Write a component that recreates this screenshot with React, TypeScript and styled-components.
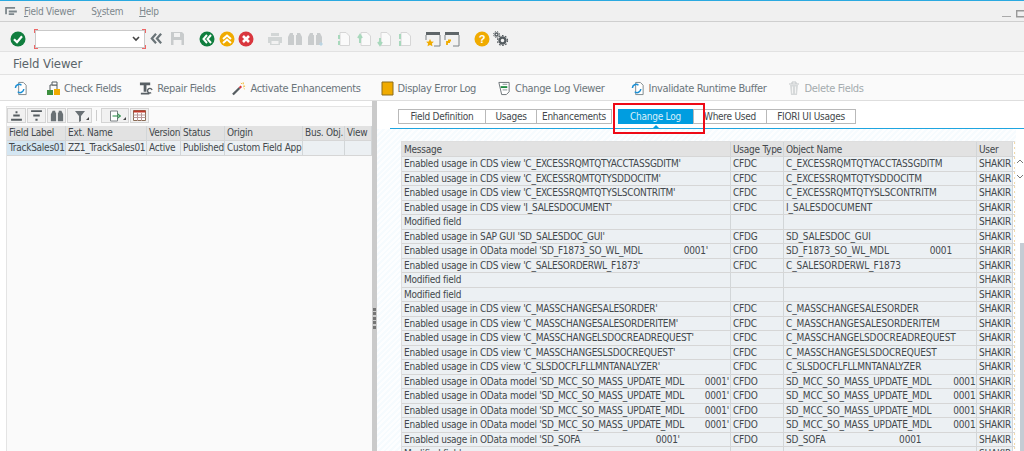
import React from "react";
import styled, { createGlobalStyle } from "styled-components";

const Global = createGlobalStyle`
  html, body { margin: 0; padding: 0; background: #fff; }
  #root { width: 1024px; height: 451px; overflow: hidden; }
  * { box-sizing: border-box; }
`;

const Page = styled.div`
  width: 1024px; height: 451px; overflow: hidden; display: flex; flex-direction: column;
  font-family: "DejaVu Sans Condensed", "Liberation Sans", Arial, sans-serif; font-size: 10px; color: #3f4a4f;
  letter-spacing: -0.25px;
  border-top: 1px solid #2aa9e0; background: #fff;
`;
const MenuBar = styled.div`
  height: 21px; flex: none; display: flex; align-items: center; padding: 0 0 0 5px; background: #f0f0f0;
  border-bottom: 1px solid #cfcfcf; color: #7d878c; font-size: 10px;
`;
const MenuItem = styled.span<{ $ml: number }>`
  margin-left: ${(p) => p.$ml}px;
`;
const Hot = styled.u`text-decoration: underline;`;
const WinCtl = styled.div`margin-left: auto; display: flex; align-items: center; padding-top: 3px;`;
const Toolbar = styled.div`
  height: 30px; flex: none; display: flex; align-items: center; padding: 4px 0 0 10px; background: #f2f2f2;
  border-bottom: 1px solid #e2e2e2;
`;
const IconSlot = styled.span<{ $ml?: number }>`
  width: 16px; height: 16px; margin-left: ${(p) => p.$ml ?? 0}px; flex: none; display: inline-flex;
  align-items: center; justify-content: center;
  svg { display: block; }
`;
const Combo = styled.div`
  width: 110px; height: 18px; margin-left: 9px; flex: none; background: #fff; border: 1px solid #c9c9c9; position: relative;
  display: flex; align-items: center; justify-content: flex-end; padding-right: 4px;
`;
const Corner = styled.i<{ $c: string }>`
  position: absolute; width: 4px; height: 4px; ${(p) => p.$c}
`;
const TitleBar = styled.div`
  height: 23px; flex: none; display: flex; align-items: center; padding-left: 13px; background: #f8f8f8;
  border-bottom: 1px solid #e2e2e2; font-size: 13px; color: #5a6469; letter-spacing: -0.1px;
`;
const AppBar = styled.div`
  height: 26px; flex: none; display: flex; align-items: center; background: #fafafa; border-bottom: 1px solid #dedede;
  padding: 1px 0 0 14px; color: #6b757a; font-size: 11px; letter-spacing: -0.35px;
`;
const AppBtn = styled.span<{ $ml: number; $gap?: number; $off?: boolean }>`
  display: inline-flex; align-items: center; gap: ${(p) => p.$gap ?? 4}px; margin-left: ${(p) => p.$ml}px; flex: none;
  color: ${(p) => (p.$off ? "#a4abae" : "#6b757a")}; white-space: nowrap;
`;
const Body = styled.div`flex: 1; display: flex; min-height: 0;`;
const LeftPane = styled.div`
  width: 372px; flex: none; background: #fff; padding: 5px 0 0 6px;
`;
const LeftInner = styled.div`
  height: 100%; background: #fafafa; border-top: 1px solid #e4e4e4; border-left: 1px solid #e4e4e4;
`;
const LeftTools = styled.div`
  height: 19px; display: flex; align-items: flex-start; padding-top: 1px; gap: 1px;
`;
const MiniBtn = styled.span<{ $w?: number }>`
  width: ${(p) => p.$w ?? 19}px; height: 15px; background: #f1f1f1; border: 1px solid #d4d4d4; display: inline-flex;
  align-items: center; justify-content: center; position: relative; flex: none;
  svg { display: block; }
`;
const Caret = styled.i`
  position: absolute; right: 2px; bottom: 2px; width: 0; height: 0; border-style: solid; border-width: 0 0 3px 3px;
  border-color: transparent transparent #444 transparent;
`;
const Sep = styled.span`width: 1px; height: 11px; margin: 2px 3px 0 3px; background: #ccc; flex: none;`;
const Splitter = styled.div`
  width: 5px; flex: none; background: #cacaca; display: flex; align-items: center; justify-content: center; padding-top: 86px;
`;
const Grip = styled.div`
  width: 3px; height: 22px;
  background: repeating-linear-gradient(to bottom, #757575 0 3px, transparent 3px 4.5px);
`;
const Row = styled.div<{ $cols: string; $h: number; $head?: boolean; $lh?: number }>`
  display: grid; grid-template-columns: ${(p) => p.$cols}; height: ${(p) => p.$h}px;
  background: ${(p) => (p.$head ? "#e2e2e2" : "#ecf0f3")};
  line-height: ${(p) => p.$lh ?? 13}px;
  color: #43484c; border-bottom: 1px solid #d6d6d6;
`;
const Cell = styled.div<{ $hl?: boolean; $mono?: boolean }>`
  padding-left: 2px; white-space: pre; overflow: hidden; border-right: 1px solid #d2d6d8;
  letter-spacing: ${(p) => (p.$mono ? "-0.13px" : "inherit")};
  background: ${(p) => (p.$hl ? "#d4e6f2" : "transparent")};
`;
const EdgeCell = styled.div`
  background: #fff repeating-linear-gradient(to bottom, #f4d9a8 0 2px, transparent 2px 5px) no-repeat 1px 0 / 1px 100%;
`;
const RightPane = styled.div`
  flex: 1; min-width: 0; padding-top: 8px; background: #fff; position: relative;
`;
const Tabs = styled.div`
  height: 16px; margin-left: 21px; display: flex;
`;
const Tab = styled.div<{ $w: number; $on?: boolean }>`
  width: ${(p) => p.$w}px; height: 15px; flex: none; text-align: center; line-height: 13px;
  position: relative; background: ${(p) => (p.$on ? "#009de0" : "#fff")}; color: ${(p) => (p.$on ? "#d8f0fb" : "#43484c")};
  border: 1px solid ${(p) => (p.$on ? "#009de0" : "#b9b9b9")};
  margin-right: ${(p) => (p.$on ? 0 : -1)}px; margin-left: ${(p) => (p.$on ? 7 : 0)}px;
  &::after {
    content: ${(p) => (p.$on ? '""' : "none")}; position: absolute; left: 50%; bottom: -5px; margin-left: -3px;
    border-style: solid; border-width: 0 3px 3px; border-color: transparent transparent #009de0;
  }
`;
const TabLine = styled.div`height: 1px; margin: 3px 0 0 13px; background: #1ea5e0;`;
const Highlight = styled.div`
  position: absolute; left: 236px; top: 2px; width: 92px; height: 31px; border: 2px solid #ee0a16; pointer-events: none;
`;
const TableArea = styled.div`
  padding: 12px 0 0 24px; height: 340px;
  background: repeating-linear-gradient(135deg, #f6fbfe 0 2px, #fdfeff 2px 4px);
`;
const TableWrap = styled.div`
  width: 614px; height: 100%; overflow: hidden; background: #fff; border-top: 1px solid #dedede; border-left: 1px solid #dedede;
`;
const Gutter = styled.div`
  position: absolute; right: 0; top: 28px; bottom: 0; width: 8px; background: #fff;
  display: flex; flex-direction: column; align-items: flex-end;
`;
const ArrowBox = styled.div`margin-top: 29px; width: 8px; svg { display: block; }`;
const Thumb = styled.div`
  position: absolute; right: 0; top: 142px; bottom: 0; width: 4px; background: #c5ccd4;
`;

const Check = () => (<svg width="16" height="16" viewBox="0 0 16 16"><circle cx="8" cy="8" r="7.5" fill="#107e3e"/><path d="M4 8.200l3 3 5-6" stroke="#fff" strokeWidth="2.200" fill="none"/></svg>);
const Dbl = ({ up, c }: { up?: boolean; c: string }) => (<svg width="16" height="16" viewBox="0 0 16 16"><circle cx="8" cy="8" r="7.500" fill={c}/><path d={up ? "M4 8l4-3.500 4 3.500M4 12l4-3.500 4 3.500" : "M8 4L4.500 8 8 12M12 4L8.500 8 12 12"} stroke="#fff" strokeWidth="2" fill="none"/></svg>);
const Cancel = () => (<svg width="16" height="16" viewBox="0 0 16 16"><circle cx="8" cy="8" r="7.500" fill="#d9363e"/><path d="M5 5l6 6M11 5l-6 6" stroke="#fff" strokeWidth="2.600"/></svg>);
const Back = () => (<svg width="13" height="13" viewBox="0 0 14 14"><path d="M6.500 2L2 7l4.500 5M12 2L7.500 7l4.500 5" stroke="#6a7478" strokeWidth="2.400" fill="none"/></svg>);
const Save = () => (<svg width="15" height="15" viewBox="0 0 15 15"><path d="M1 1h11l2 2v11H1z" fill="#c8cbcc"/><path d="M4 2h6v4H4zM3.500 9h8v5h-8z" fill="#f2f2f2"/></svg>);
const Print = () => (<svg width="16" height="16" viewBox="0 0 16 16"><path d="M4 2h8v3H4zM1 6h14v6h-2v2H3v-2H1z" fill="#d2d6d6"/><path d="M4.500 10h7v3h-7z" fill="#f2f2f2"/></svg>);
const Binoc = ({ c = "#c9cccd", plus, size = 16 }: { c?: string; plus?: boolean; size?: number }) => (<svg width={size} height={size} viewBox="0 0 16 16"><path d="M3 2h3v2h1v10H1V6zM10 2h3l2 4v8H9V4h1z" fill={c}/>{plus && <path d="M12 13h4M14 11v4" stroke="#b6d6e8"/>}</svg>);
const Doc = ({ mark, c = "#a8d8bc" }: { mark: string; c?: string }) => (<svg width="15" height="16" viewBox="0 0 15 16"><path d="M4 1.500h6l3.500 3.500v9.500H4z" fill="#fafafa" stroke="#d6d6d6"/><path d={mark} stroke={c} strokeWidth="2" fill="none"/></svg>);
const Win = ({ star }: { star?: boolean }) => (<svg width="16" height="16" viewBox="0 0 16 16"><path d="M1 1h14v3H1z" fill="#5f6669"/><path d="M15 4v11H9M1 4v5" stroke="#7c8285" fill="none"/>{star ? <path d="M5 8l1.200 2.500 2.700.3-2 1.800.6 2.700L5 14l-2.500 1.300.6-2.700-2-1.800 2.700-.3z" fill="#f0ab00"/> : <path d="M3 14v-3h3M4 9.500h3" stroke="#f0ab00" strokeWidth="1.800" fill="none"/>}</svg>);
const Help = () => (<svg width="16" height="16" viewBox="0 0 16 16"><circle cx="8" cy="8" r="7.500" fill="#f0ab00"/><text x="8" y="12" fontSize="11" fontWeight="bold" textAnchor="middle" fill="#fff" fontFamily="Liberation Sans">?</text></svg>);
const Gears = () => (<svg width="16" height="16" viewBox="0 0 16 16"><g fill="none" stroke="#555c60"><circle cx="9.500" cy="9.500" r="3" strokeWidth="2.400"/><circle cx="9.500" cy="9.500" r="5" strokeWidth="1.200" strokeDasharray="1.600 1.600"/><circle cx="3.500" cy="3.500" r="1.500" strokeWidth="1.400"/><circle cx="3.500" cy="3.500" r="3" strokeWidth="1" strokeDasharray="1.200 1.200"/></g></svg>);
const Refresh = () => (<svg width="14" height="15" viewBox="0 0 15 15"><path d="M5 1h5l3 3v10H5z" fill="#fff" stroke="#7b8488"/><path d="M1.500 7a4 4 0 016.500-3M10.500 8a4 4 0 01-6.500 3" stroke="#1a8fd6" strokeWidth="1.600" fill="none"/></svg>);
const CheckF = () => (<svg width="15" height="15" viewBox="0 0 15 15"><path d="M1 9h6v5H1z" fill="#3d8f3f"/><path d="M8 8h6v6H8z" fill="#f0ab00"/><path d="M4 9V4h7v4" stroke="#555c60" fill="none"/><path d="M6 1h5v3H6z" fill="#fff" stroke="#555c60"/></svg>);
const Repair = () => (<svg width="14" height="15" viewBox="0 0 15 15"><path d="M1 1h11v3H1zM5 4h3v7H5zM2 12h9v2H2z" fill="#596065"/><path d="M14 9a2.500 2.500 0 10-1 3" stroke="#596065" strokeWidth="1.500" fill="none"/></svg>);
const Wand = () => (<svg width="14" height="15" viewBox="0 0 15 15"><path d="M1 14l7-7" stroke="#555c60" strokeWidth="2.400"/><path d="M8 7l2-2" stroke="#d9363e" strokeWidth="2.200"/><path d="M12 1v2M14 5h-2M9.500 1.500l1 1M13.500 8l-1-1" stroke="#f0ab00"/></svg>);
const ErrLog = () => (<svg width="13" height="15" viewBox="0 0 13 15"><path d="M1 1h11v13H1z" fill="#f0ab00" stroke="#8b6d1c"/></svg>);
const ChangeLog = () => (<svg width="14" height="15" viewBox="0 0 15 15"><path d="M2 1h11v10l-3 3H5z" fill="#fff" stroke="#676f73"/><path d="M4 6h7" stroke="#1d8a3f" strokeWidth="2"/><path d="M6 3h5M6 9h5" stroke="#8a9296"/></svg>);
const Trash = () => (<svg width="14" height="15" viewBox="0 0 14 15"><path d="M2 3h10M5 3V1h4v2" stroke="#c2c6c8" fill="none"/><path d="M3 4h8l-1 10H4z" fill="#d6d9da"/><path d="M5.500 5.500v7M8.500 5.500v7" stroke="#f4f4f4"/></svg>);
const Chevron = () => (<svg width="8" height="6" viewBox="0 0 8 6"><path d="M1 1l3 3 3-3" stroke="#444" strokeWidth="1.600" fill="none"/></svg>);
const Lines = ({ d }: { d: string }) => (<svg width="13" height="12" viewBox="0 0 12 11"><path d={d} stroke="#555c60" strokeWidth="1.800" fill="none"/></svg>);
const Funnel = () => (<svg width="12" height="12" viewBox="0 0 12 12"><path d="M1 1h10L7 6v5L5 12V6z" fill="#6a7175"/></svg>);
const Export = () => (<svg width="13" height="12" viewBox="0 0 12 12"><path d="M1 1h7v10H1z" fill="#fff" stroke="#7c8285"/><path d="M3 6h8M8 3.500L11 6 8 8.500" stroke="#1d8a3f" fill="none"/></svg>);
const Layout = () => (<svg width="13" height="11" viewBox="0 0 13 11"><path d="M.5.500h12v10H.5z" fill="#fff" stroke="#8a6d55"/><path d="M.5.500h12v2H.5z" fill="#c0392b"/><path d="M.5 5h12M.5 7.500h12M4.500 3v8M8.500 3v8" stroke="#b99"/></svg>);

const leftCols = "59px 81px 34px 44px 78px 42px 1fr";
const rightCols = "329px 53px 193px 36px 1fr";
const sp = (n: number) => " ".repeat(n);
const msg = (name: string, gap: number) => `Enabled usage in OData model '${name}${sp(gap)}0001'`;
const obj = (name: string, gap: number) => `${name}${sp(gap)}0001`;
const MCC = "SD_MCC_SO_MASS_UPDATE_MDL";
const F = "SD_F1873_SO_WL_MDL";
const S = "SD_SOFA";
const rows: [string, string, string][] = [
  ["Enabled usage in CDS view 'C_EXCESSRQMTQTYACCTASSGDITM'", "CFDC", "C_EXCESSRQMTQTYACCTASSGDITM"],
  ["Enabled usage in CDS view 'C_EXCESSRQMTQTYSDDOCITM'", "CFDC", "C_EXCESSRQMTQTYSDDOCITM"],
  ["Enabled usage in CDS view 'C_EXCESSRQMTQTYSLSCONTRITM'", "CFDC", "C_EXCESSRQMTQTYSLSCONTRITM"],
  ["Enabled usage in CDS view 'I_SALESDOCUMENT'", "CFDC", "I_SALESDOCUMENT"],
  ["Modified field", "", ""],
  ["Enabled usage in SAP GUI 'SD_SALESDOC_GUI'", "CFDG", "SD_SALESDOC_GUI"],
  [msg(F, 16), "CFDO", obj(F, 15)],
  ["Enabled usage in CDS view 'C_SALESORDERWL_F1873'", "CFDC", "C_SALESORDERWL_F1873"],
  ["Modified field", "", ""],
  ["Modified field", "", ""],
  ["Enabled usage in CDS view 'C_MASSCHANGESALESORDER'", "CFDC", "C_MASSCHANGESALESORDER"],
  ["Enabled usage in CDS view 'C_MASSCHANGESALESORDERITEM'", "CFDC", "C_MASSCHANGESALESORDERITEM"],
  ["Enabled usage in CDS view 'C_MASSCHANGELSDOCREADREQUEST'", "CFDC", "C_MASSCHANGELSDOCREADREQUEST"],
  ["Enabled usage in CDS view 'C_MASSCHANGESLSDOCREQUEST'", "CFDC", "C_MASSCHANGESLSDOCREQUEST"],
  ["Enabled usage in CDS view 'C_SLSDOCFLFLLMNTANALYZER'", "CFDC", "C_SLSDOCFLFLLMNTANALYZER"],
  [msg(MCC, 8), "CFDO", obj(MCC, 8)],
  [msg(MCC, 8), "CFDO", obj(MCC, 8)],
  [msg(MCC, 8), "CFDO", obj(MCC, 8)],
  [msg(MCC, 8), "CFDO", obj(MCC, 8)],
  [msg(S, 29), "CFDO", obj(S, 27)],
  ["Modified field", "", ""],
];

export default function App() {
  return (
    <Page>
      <Global />
      <MenuBar>
        <svg width="12" height="9" viewBox="0 0 13 10"><path d="M0 0h11v2H0zM4 4h9v2H4zM4 7h6v2H4zM0 2h2v6H0z" fill="#7d878c"/></svg>
        <MenuItem $ml={7}><Hot>F</Hot>ield Viewer</MenuItem>
        <MenuItem $ml={16}>S<Hot>y</Hot>stem</MenuItem>
        <MenuItem $ml={16}><Hot>H</Hot>elp</MenuItem>
        <WinCtl>
          <svg width="22" height="10" viewBox="0 0 22 10"><path d="M0 8.500h9" stroke="#aaa"/><path d="M14.700 2.700h8v6h-8z" fill="none" stroke="#999" strokeWidth="1.400"/></svg>
        </WinCtl>
      </MenuBar>
      <Toolbar>
        <IconSlot><Check /></IconSlot>
        <Combo>
          <Corner $c="left:-2px;top:-2px;border-left:1px solid #e66;border-top:1px solid #e66;" />
          <Corner $c="right:-2px;top:-2px;border-right:1px solid #e66;border-top:1px solid #e66;" />
          <Corner $c="left:-2px;bottom:-2px;border-left:1px solid #e66;border-bottom:1px solid #e66;" />
          <Corner $c="right:-2px;bottom:-2px;border-right:1px solid #e66;border-bottom:1px solid #e66;" />
          <Chevron />
        </Combo>
        <IconSlot $ml={3}><Back /></IconSlot>
        <IconSlot $ml={5}><Save /></IconSlot>
        <IconSlot $ml={14}><Dbl c="#107e3e" /></IconSlot>
        <IconSlot $ml={4}><Dbl up c="#f0ab00" /></IconSlot>
        <IconSlot $ml={3}><Cancel /></IconSlot>
        <IconSlot $ml={13}><Print /></IconSlot>
        <IconSlot $ml={4}><Binoc /></IconSlot>
        <IconSlot $ml={4}><Binoc plus /></IconSlot>
        <IconSlot $ml={12}><Doc mark="M3 4v4M3 10v4" /></IconSlot>
        <IconSlot $ml={5}><Doc mark="M3 12V5M1 7l2-3 2 3" /></IconSlot>
        <IconSlot $ml={4}><Doc mark="M3 7v7M1 11l2 3 2-3" /></IconSlot>
        <IconSlot $ml={4}><Doc mark="M3 3v5M3 10v5" /></IconSlot>
        <IconSlot $ml={13}><Win star /></IconSlot>
        <IconSlot $ml={3}><Win /></IconSlot>
        <IconSlot $ml={14}><Help /></IconSlot>
        <IconSlot $ml={3}><Gears /></IconSlot>
      </Toolbar>
      <TitleBar>Field Viewer</TitleBar>
      <AppBar>
        <Refresh />
        <AppBtn $ml={18} $gap={3}><CheckF />Check Fields</AppBtn>
        <AppBtn $ml={18}><Repair />Repair Fields</AppBtn>
        <AppBtn $ml={17}><Wand />Activate Enhancements</AppBtn>
        <AppBtn $ml={20}><ErrLog />Display Error Log</AppBtn>
        <AppBtn $ml={21}><ChangeLog />Change Log Viewer</AppBtn>
        <AppBtn $ml={26}><Refresh />Invalidate Runtime Buffer</AppBtn>
        <AppBtn $ml={20} $off><Trash />Delete Fields</AppBtn>
      </AppBar>
      <Body>
        <LeftPane>
          <LeftInner>
            <LeftTools>
              <MiniBtn><Lines d="M6 1v2M3 5h6M1 9h10" /></MiniBtn>
              <MiniBtn><Lines d="M1 1h10M3 5h6M5 9h2" /></MiniBtn>
              <MiniBtn><Binoc c="#6a7175" size={14} /></MiniBtn>
              <MiniBtn $w={25}><Funnel /><Caret /></MiniBtn>
              <Sep />
              <MiniBtn $w={28}><Export /><Caret /></MiniBtn>
              <MiniBtn><Layout /></MiniBtn>
            </LeftTools>
            <Row $cols={leftCols} $h={15} $lh={14} $head>
              <Cell>Field Label</Cell><Cell>Ext. Name</Cell><Cell>Version</Cell><Cell>Status</Cell><Cell>Origin</Cell><Cell>Bus. Obj.</Cell><Cell>View</Cell>
            </Row>
            <Row $cols={leftCols} $h={15} $lh={13}>
              <Cell $hl>TrackSales01</Cell><Cell>ZZ1_TrackSales01</Cell><Cell>Active</Cell><Cell>Published</Cell><Cell>Custom Field App</Cell><Cell /><Cell />
            </Row>
          </LeftInner>
        </LeftPane>
        <Splitter><Grip /></Splitter>
        <RightPane>
          <Tabs>
            <Tab $w={88}>Field Definition</Tab>
            <Tab $w={52}>Usages</Tab>
            <Tab $w={76}>Enhancements</Tab>
            <Tab $w={75} $on>Change Log</Tab>
            <Tab $w={74}>Where Used</Tab>
            <Tab $w={90}>FIORI UI Usages</Tab>
          </Tabs>
          <TabLine />
          <Highlight />
          <TableArea>
            <TableWrap>
              <Row $cols={rightCols} $h={15} $lh={15} $head>
                <Cell>Message</Cell><Cell>Usage Type</Cell><Cell>Object Name</Cell><Cell>User</Cell><EdgeCell />
              </Row>
              {rows.map((r, i) => (
                <Row key={i} $cols={rightCols} $h={14.53}>
                  <Cell>{r[0]}</Cell><Cell>{r[1]}</Cell><Cell $mono>{r[2]}</Cell><Cell>SHAKIR</Cell><EdgeCell />
                </Row>
              ))}
            </TableWrap>
          </TableArea>
          <Gutter>
            <ArrowBox>
              <svg width="8" height="22" viewBox="0 0 8 22"><path d="M1 5l3-3 3 3M1 17l3 3 3-3" stroke="#777" fill="none"/></svg>
            </ArrowBox>
          </Gutter>
          <Thumb />
        </RightPane>
      </Body>
    </Page>
  );
}
